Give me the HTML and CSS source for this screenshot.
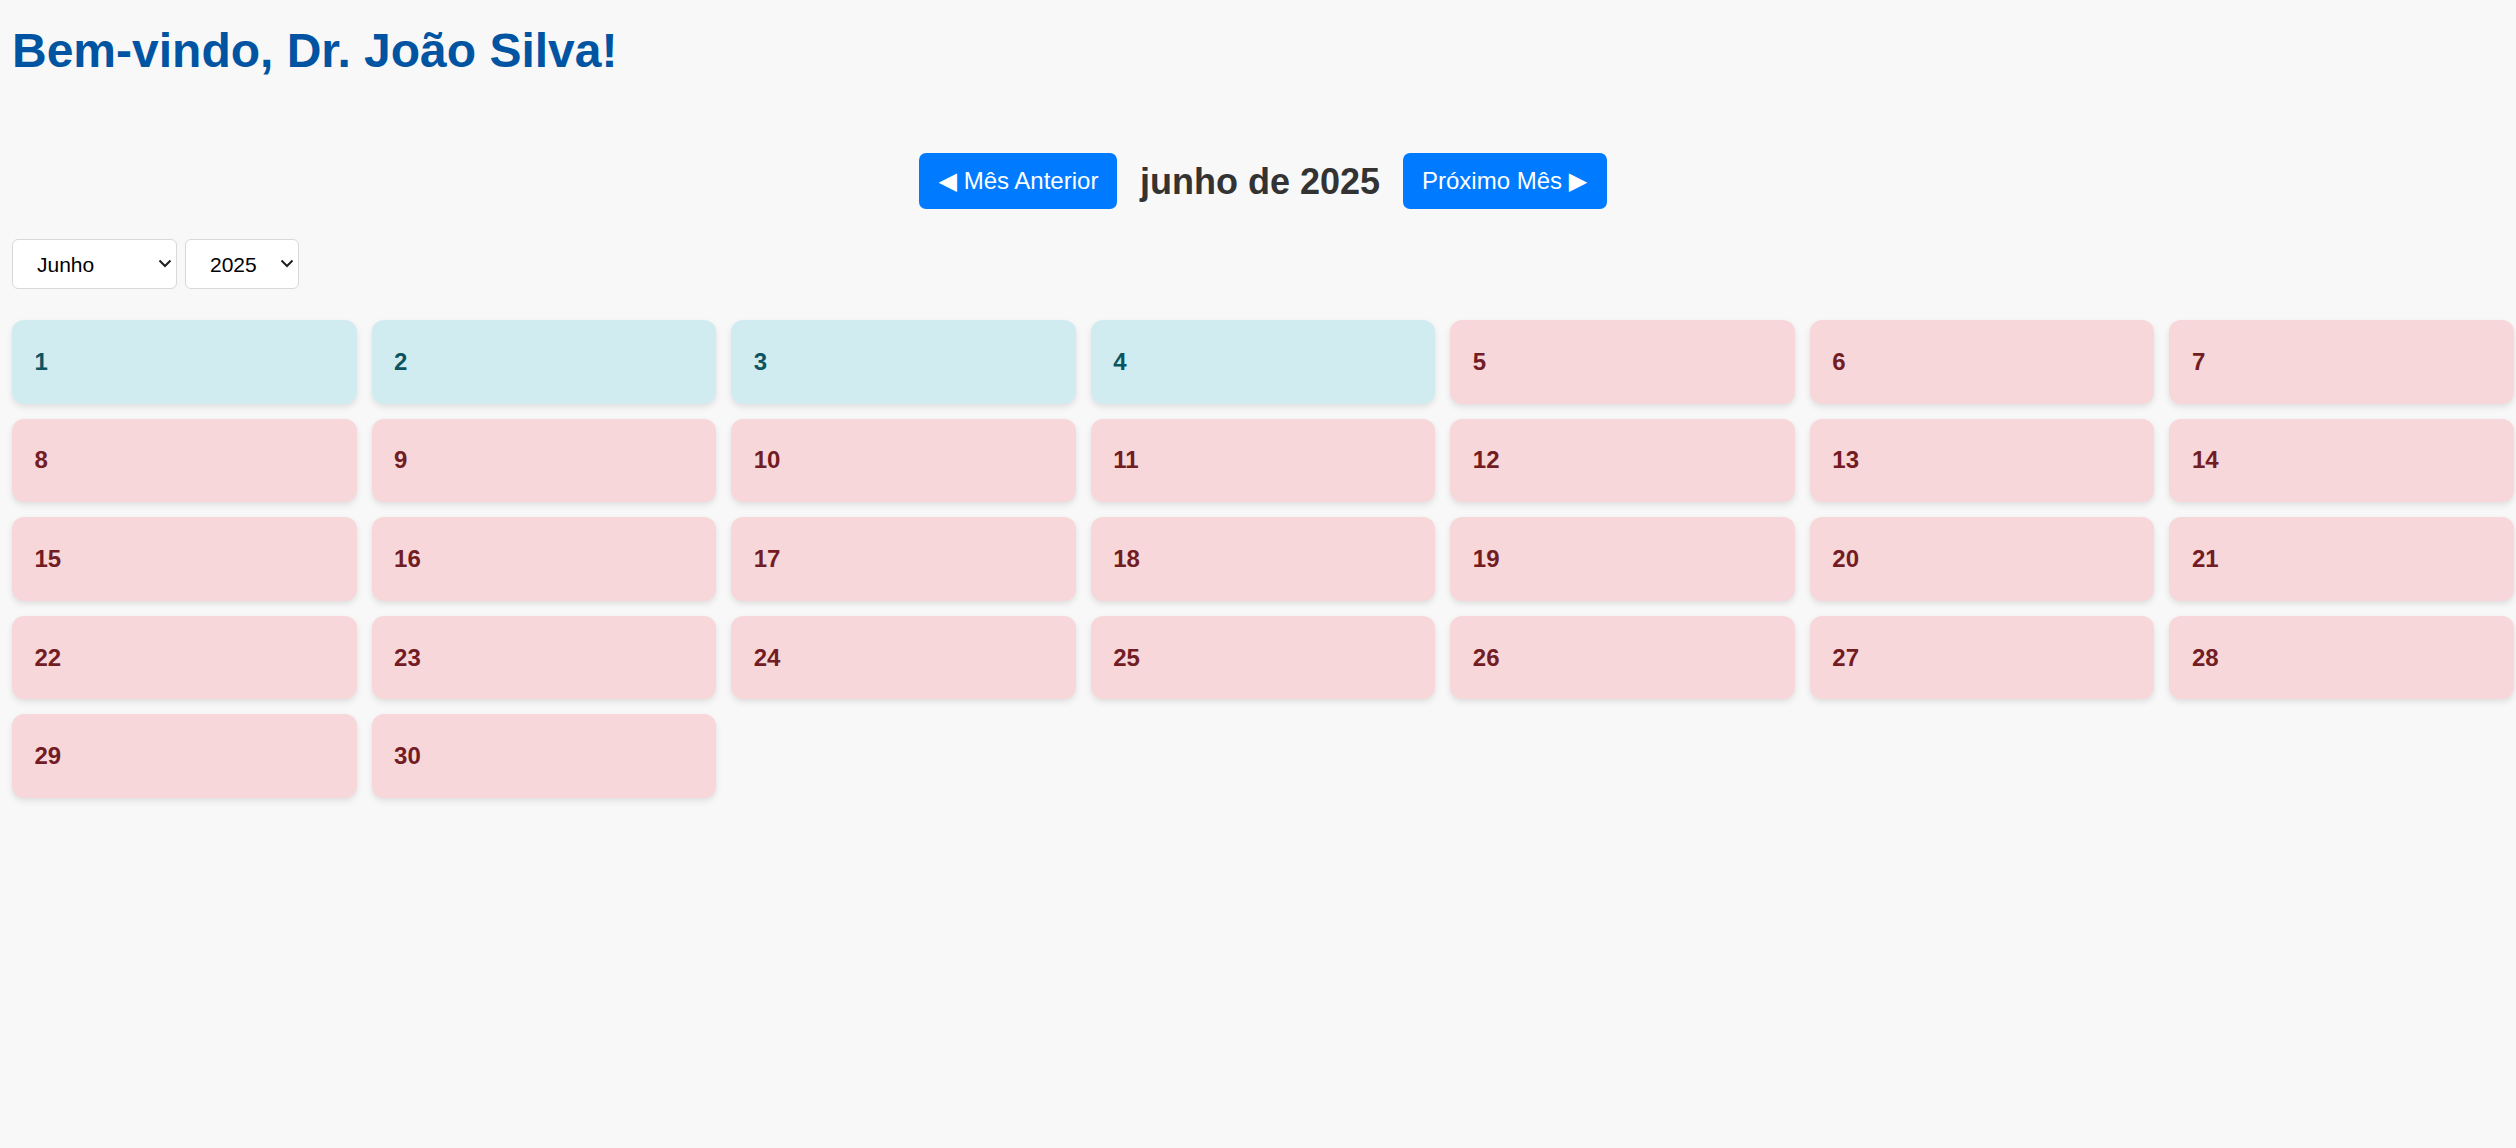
FILE: index.html
```html
<!DOCTYPE html>
<html lang="pt-BR">
<head>
<meta charset="utf-8">
<title>Calendário</title>
<link rel="stylesheet" href="styles.css">
</head>
<body>
<div class="page">
  <h1 class="welcome">Bem-vindo, Dr. João Silva!</h1>

  <div class="month-nav">
    <button class="nav-btn prev-btn" type="button">◀ Mês Anterior</button>
    <h2 class="month-title">junho de 2025</h2>
    <button class="nav-btn next-btn" type="button">Próximo Mês ▶</button>
  </div>

  <div class="controls">
    <div class="select-wrap month-select">
      <select class="picker">
        <option>Janeiro</option><option>Fevereiro</option><option>Março</option>
        <option>Abril</option><option>Maio</option><option selected>Junho</option>
        <option>Julho</option><option>Agosto</option><option>Setembro</option>
        <option>Outubro</option><option>Novembro</option><option>Dezembro</option>
      </select>
      <svg class="chev" width="14" height="9" viewBox="0 0 14 9"><polyline points="1.5,1.5 7,7 12.5,1.5" fill="none" stroke="#1f1f1f" stroke-width="2"/></svg>
    </div>
    <div class="select-wrap year-select">
      <select class="picker">
        <option>2024</option><option selected>2025</option><option>2026</option>
      </select>
      <svg class="chev" width="14" height="9" viewBox="0 0 14 9"><polyline points="1.5,1.5 7,7 12.5,1.5" fill="none" stroke="#1f1f1f" stroke-width="2"/></svg>
    </div>
  </div>

  <div class="calendar">
    <div class="day avail">1</div>
    <div class="day avail">2</div>
    <div class="day avail">3</div>
    <div class="day avail">4</div>
    <div class="day busy">5</div>
    <div class="day busy">6</div>
    <div class="day busy">7</div>
    <div class="day busy">8</div>
    <div class="day busy">9</div>
    <div class="day busy">10</div>
    <div class="day busy">11</div>
    <div class="day busy">12</div>
    <div class="day busy">13</div>
    <div class="day busy">14</div>
    <div class="day busy">15</div>
    <div class="day busy">16</div>
    <div class="day busy">17</div>
    <div class="day busy">18</div>
    <div class="day busy">19</div>
    <div class="day busy">20</div>
    <div class="day busy">21</div>
    <div class="day busy">22</div>
    <div class="day busy">23</div>
    <div class="day busy">24</div>
    <div class="day busy">25</div>
    <div class="day busy">26</div>
    <div class="day busy">27</div>
    <div class="day busy">28</div>
    <div class="day busy">29</div>
    <div class="day busy">30</div>
  </div>
</div>
</body>
</html>
```
FILE: styles.css
```css
* { box-sizing: border-box; }

html, body {
  margin: 0;
  padding: 0;
  background: #f8f8f8;
}

body {
  font-family: "Liberation Sans", Arial, sans-serif;
  color: #333;
}

.page {
  padding: 0 2px 12px 12px;
}

.welcome {
  margin: 23px 0 0 0;
  font-size: 48px;
  line-height: 55px;
  font-weight: bold;
  color: #0154a1;
}

.month-nav {
  margin-top: 75px;
  height: 56px;
  display: flex;
  justify-content: center;
  align-items: center;
}

.nav-btn {
  height: 56px;
  padding: 0 18px;
  border: none;
  border-radius: 7px;
  background: #007bff;
  color: #fff;
  font-family: "Liberation Sans", Arial, "DejaVu Sans", sans-serif;
  font-size: 24px;
  line-height: 28px;
  display: inline-flex;
  align-items: center;
  justify-content: center;
  cursor: pointer;
}

.prev-btn { width: 198px; }
.next-btn { width: 204px; }

.month-title {
  margin: 0 22.5px;
  font-size: 36px;
  line-height: 41px;
  font-weight: bold;
  color: #333;
}

.controls {
  margin-top: 30px;
  display: flex;
  gap: 8px;
  height: 50px;
}

.select-wrap {
  position: relative;
  height: 50px;
}

.month-select { width: 165px; }
.year-select { width: 114px; }

.picker {
  -webkit-appearance: none;
  appearance: none;
  width: 100%;
  height: 50px;
  padding: 0 0 0 24px;
  border: 1px solid #d8d8d8;
  border-radius: 6px;
  background: #fff;
  color: #000;
  font-family: "Liberation Sans", Arial, sans-serif;
  font-size: 21px;
}

.chev {
  position: absolute;
  right: 5px;
  top: 20px;
  pointer-events: none;
}

.calendar {
  margin-top: 31px;
  display: grid;
  grid-template-columns: repeat(7, 1fr);
  gap: 15px;
}

.day {
  height: 83.6px;
  padding: 0 22.5px;
  border-radius: 12px;
  display: flex;
  align-items: center;
  font-size: 24px;
  font-weight: bold;
  box-shadow: 0 3px 6px rgba(0, 0, 0, 0.1);
}

.avail {
  background: #d1ecf1;
  color: #0c5460;
}

.busy {
  background: #f8d7da;
  color: #721c24;
}
```
